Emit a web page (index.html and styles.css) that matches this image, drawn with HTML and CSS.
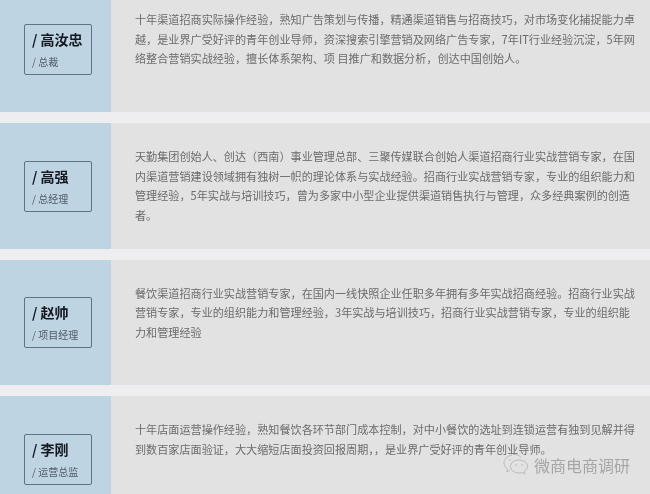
FILE: index.html
```html
<!DOCTYPE html>
<html lang="zh">
<head>
<meta charset="utf-8">
<title>团队介绍</title>
<link rel="stylesheet" href="styles.css">
</head>
<body>
<main class="page">
  <section class="row">
    <div class="side"><div class="tag"><div class="name">/ 高汝忠</div><div class="role">/ 总裁</div></div></div>
    <div class="bio">
      <p>十年渠道招商实际操作经验，熟知广告策划与传播，精通渠道销售与招商技巧，对市场变化捕捉能力卓</p>
      <p>越，是业界广受好评的青年创业导师，资深搜索引擎营销及网络广告专家，7年IT行业经验沉淀，5年网</p>
      <p>络整合营销实战经验，擅长体系架构、项 目推广和数据分析，创达中国创始人。</p>
    </div>
  </section>
  <section class="row">
    <div class="side"><div class="tag"><div class="name">/ 高强</div><div class="role">/ 总经理</div></div></div>
    <div class="bio">
      <p>天勤集团创始人、创达（西南）事业管理总部、三聚传媒联合创始人渠道招商行业实战营销专家，在国</p>
      <p>内渠道营销建设领域拥有独树一帜的理论体系与实战经验。招商行业实战营销专家，专业的组织能力和</p>
      <p>管理经验，5年实战与培训技巧，曾为多家中小型企业提供渠道销售执行与管理，众多经典案例的创造</p>
      <p>者。</p>
    </div>
  </section>
  <section class="row">
    <div class="side"><div class="tag"><div class="name">/ 赵帅</div><div class="role">/ 项目经理</div></div></div>
    <div class="bio">
      <p>餐饮渠道招商行业实战营销专家，在国内一线快照企业任职多年拥有多年实战招商经验。招商行业实战</p>
      <p>营销专家，专业的组织能力和管理经验，3年实战与培训技巧，招商行业实战营销专家，专业的组织能</p>
      <p>力和管理经验</p>
    </div>
  </section>
  <section class="row">
    <div class="side"><div class="tag"><div class="name">/ 李刚</div><div class="role">/ 运营总监</div></div></div>
    <div class="bio">
      <p>十年店面运营操作经验，熟知餐饮各环节部门成本控制，对中小餐饮的选址到连锁运营有独到见解并得</p>
      <p>到数百家店面验证，大大缩短店面投资回报周期，，是业界广受好评的青年创业导师。</p>
    </div>
  </section>
</main>
<div class="mark">
  <svg class="mark-icon" width="26" height="24" viewBox="0 0 26 24" fill="none" stroke="#b9b9b9" stroke-width="1">
    <path d="M9 2C4 3 1 6.500 1 10c0 2.500 1.300 4.500 3.500 6l-.7 3 3-1.700"/>
    <path d="M10 1.500c3-.5 6 .5 8 3"/>
    <path d="M16 7c-5 0-8.500 3-8.500 6.500S11 20 16 20c1 0 2-.2 3-.5l3 1.500-.7-2.700c2-1.300 3.200-3 3.200-4.800C24.500 10 21 7 16 7z"/>
    <circle cx="7" cy="7" r=".8" fill="#b9b9b9" stroke="none"/>
    <circle cx="13" cy="12" r=".8" fill="#b9b9b9" stroke="none"/>
    <circle cx="19" cy="12" r=".8" fill="#b9b9b9" stroke="none"/>
  </svg>
  <span class="mark-text">微商电商调研</span>
</div>
</body>
</html>
```
FILE: styles.css
```css
* { box-sizing: border-box; }
html, body { margin: 0; height: 494px; overflow: hidden; }
body {
  position: relative;
  background: #eeedef;
  font-family: "Noto Sans CJK SC", "Liberation Sans", sans-serif;
}
.page {
  display: flex;
  flex-direction: column;
  gap: 11px;
  margin-top: -13.600px;
}
.row {
  display: flex;
  flex: none;
  height: 125.600px;
  background: #e2e2e2;
}
.side {
  flex: none;
  width: 111px;
  padding: 1px 0 0 24px;
  display: flex;
  align-items: center;
  background: #bfd4e3;
}
.tag {
  width: 68px;
  height: 51px;
  padding: 4px 0 0 7px;
  border: 1px solid #5f7488;
  border-radius: 2px;
  white-space: nowrap;
  filter: blur(.3px);
}
.name {
  font-size: 14px;
  line-height: 20px;
  font-weight: 700;
  color: #14181e;
}
.role {
  margin-top: 6px;
  font-size: 10px;
  line-height: 14px;
  color: #4f5b66;
}
.bio {
  flex: 1;
  padding: 24px 0 0 24px;
  font-size: 11.120px;
  line-height: 19.500px;
  color: #6b6b6b;
  white-space: nowrap;
  filter: blur(.35px);
}
.bio p { margin: 0; }
.mark {
  position: absolute;
  left: 503px;
  top: 453px;
  display: flex;
  align-items: center;
  gap: 5px;
  filter: blur(.4px);
}
.mark-text {
  font-size: 16px;
  line-height: 24px;
  color: #a6a6a6;
}
```
